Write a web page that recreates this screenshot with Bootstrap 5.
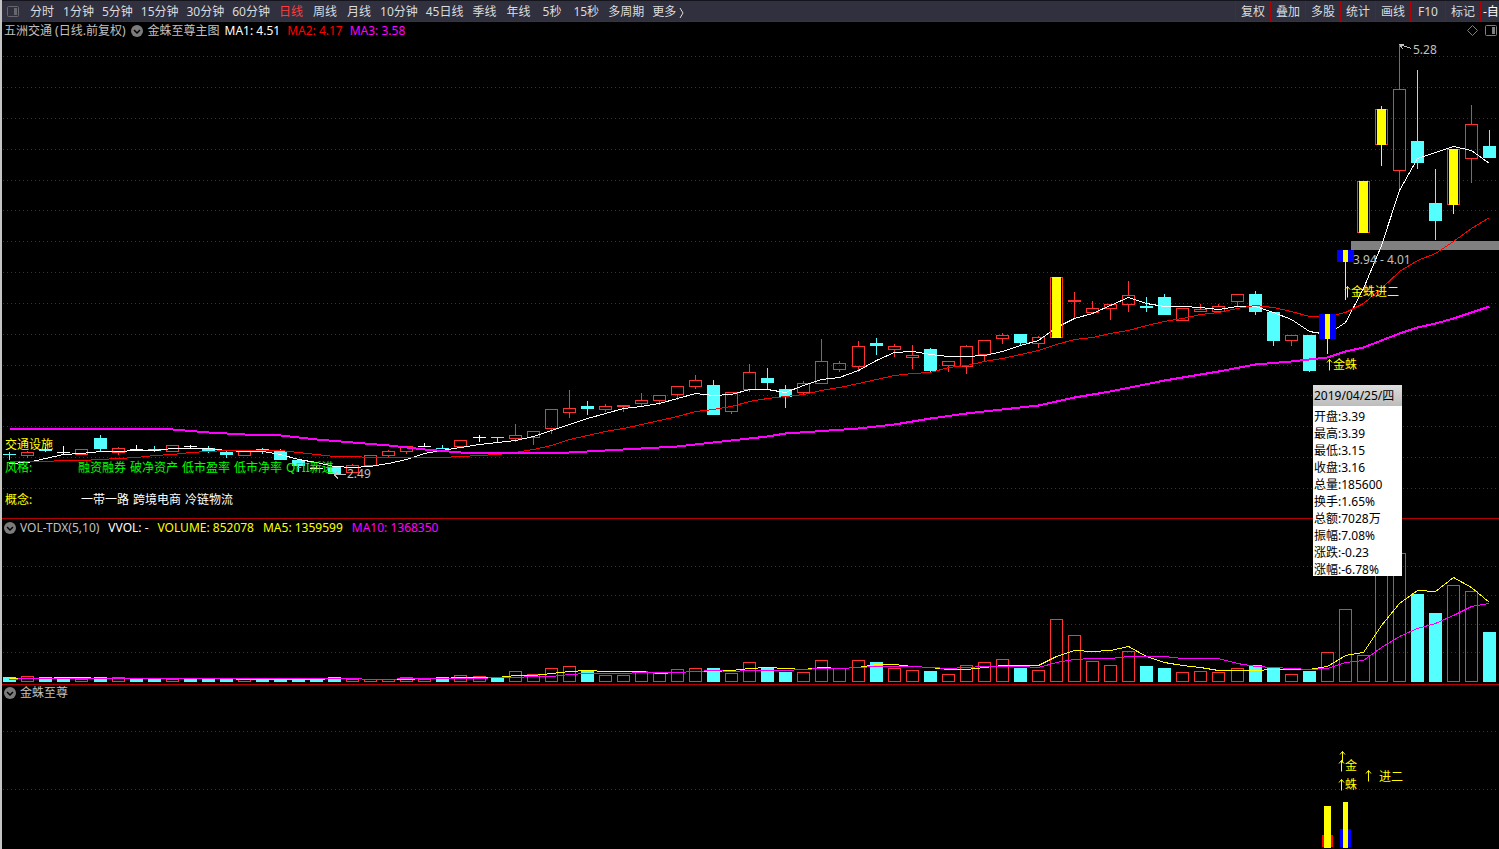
<!DOCTYPE html>
<html lang="zh-CN">
<head>
<meta charset="utf-8">
<meta name="viewport" content="width=device-width, initial-scale=1">
<title>五洲交通 日线</title>
<link href="https://cdn.jsdelivr.net/npm/bootstrap@5.3.0/dist/css/bootstrap.min.css" rel="stylesheet">
<style>
  body { font: 12px/16px "Noto Sans", "Noto Sans CJK SC", sans-serif; color: #c0c0c0; background: #000; border-left: 2px solid #c4c4c4; }
  .toolbar { height: 22px; background: #30303f; border-top: 1px solid #14141c; border-bottom: 1px solid #b40000; padding-left: 5px; gap: 6px; }
  .toolbar button { background: none; border: 0; color: #dcdcdc; line-height: 16px; padding: 2px 4px 0; white-space: nowrap; flex-shrink: 0; }
  .toolbar .two { padding: 2px 5px 0; }
  .toolbar .sec { padding: 2px 7px 0; }
  .toolbar .on { color: #ff3c3c; }
  .toolbar .tools button { width: 35px; padding: 2px 0 0; border-left: 1px solid #b40000; align-self: stretch; }
  .toolbar .tools button:last-child { width: 19px; padding-left: 2px; text-align: left; color: #fff; }
  .pane { display: grid; min-height: 0; overflow: hidden; position: relative; }
  .pane > * { grid-area: 1 / 1; }
  .pane > svg { width: 100%; height: 100%; min-height: 0; }
  .pane-price { flex: 496 1 0; border-bottom: 1px solid #b40000; }
  .pane-vol { flex: 165 1 0; border-bottom: 1px solid #b40000; }
  .pane-sig { flex: 164 1 0; }
  .caption { align-self: start; padding: 0 2px; height: 17px; white-space: nowrap; z-index: 1; gap: 5px; }
  .caption .values { gap: 7px; }
  .pane-vol .caption { gap: 9px; }
  .pane-sig .caption { height: 15px; }
  .caption button { background: none; border: 0; padding: 0; line-height: 0; }
  .c-w { color: #fff; } .c-r { color: #f00; } .c-m { color: #f0f; } .c-y { color: #ff0; } .c-g { color: #0f0; }
  .note { position: absolute; white-space: nowrap; margin-top: -7px; height: 16px; display: flex; align-items: center; }
  .quote { position: absolute; right: 97px; top: 363px; width: 89px; background: #fff; color: #000; z-index: 2; line-height: 17px; }
  .quote header { height: 21px; line-height: 21px; padding-left: 1px; margin-bottom: 2px; background: linear-gradient(#dedede, #bcbcbc); }
  .quote dl { padding-left: 1px; height: 168px; }
  .quote dt { font-weight: 400; }
</style>
</head>
<body class="vh-100 d-flex flex-column overflow-hidden m-0">
<nav class="toolbar d-flex align-items-center flex-shrink-0" aria-label="周期">
  <svg class="flex-shrink-0" width="12" height="11" aria-hidden="true"><rect x=".5" y=".5" width="11" height="10" rx="1" fill="none" stroke="#66666e"/><path d="M7 2h3v7H7z" fill="#66666e"/></svg>
  <div class="d-flex" id="periods">
    <button class="two">分时</button><button>1分钟</button><button>5分钟</button><button>15分钟</button><button>30分钟</button><button>60分钟</button><button class="two on">日线</button><button class="two">周线</button><button class="two">月线</button><button>10分钟</button><button>45日线</button><button class="two">季线</button><button class="two">年线</button><button class="sec">5秒</button><button class="two">15秒</button><button>多周期</button><button>更多 <svg width="6" height="12" viewBox="0 0 6 12" fill="none" stroke="currentColor"><path d="M1 1l3 5-3 5"/></svg></button>
  </div>
  <div class="tools d-flex ms-auto h-100"><button>复权</button><button>叠加</button><button>多股</button><button>统计</button><button>画线</button><button>F10</button><button>标记</button><button>-自</button></div>
</nav>

<main class="flex-grow-1 d-flex flex-column position-relative">
  <section class="pane pane-price" id="price">
    <svg viewBox="2 22 1497 496" preserveAspectRatio="none" shape-rendering="crispEdges"></svg>
    <div class="caption d-flex align-items-center">
      <span>五洲交通 (日线.前复权)</span>
      <button aria-label="指标菜单"><svg width="12" height="12"><circle cx="6" cy="6" r="6" fill="#7c7c7c"/><path d="M3 5l3 3 3-3" fill="none" stroke="#000" stroke-width="1.500"/></svg></button>
      <span>金蛛至尊主图</span>
      <div class="values d-flex"><span class="c-w">MA1: 4.51</span><span class="c-r">MA2: 4.17</span><span class="c-m">MA3: 3.58</span></div>
      <div class="values d-flex ms-auto">
        <svg width="11" height="11"><path d="M5.500 .5l5 5-5 5-5-5z" fill="none" stroke="#808080"/></svg>
        <svg width="12" height="11"><rect x=".5" y=".5" width="11" height="10" rx="1" fill="none" stroke="#808080"/><path d="M7 2h3v7H7z" fill="#808080"/></svg>
      </div>
    </div>
  </section>
  <section class="pane pane-vol" id="vol">
    <svg viewBox="2 519 1497 165" preserveAspectRatio="none" shape-rendering="crispEdges"></svg>
    <div class="caption d-flex align-items-center">
      <div class="d-flex align-items-center gap-1">
        <button aria-label="指标菜单"><svg width="12" height="12"><circle cx="6" cy="6" r="6" fill="#7c7c7c"/><path d="M3 5l3 3 3-3" fill="none" stroke="#000" stroke-width="1.500"/></svg></button>
        <span>VOL-TDX(5,10)</span>
      </div>
      <span class="c-w">VVOL: -</span><span class="c-y">VOLUME: 852078</span><span class="c-y">MA5: 1359599</span><span class="c-m">MA10: 1368350</span>
    </div>
  </section>
  <section class="pane pane-sig" id="sig">
    <svg viewBox="2 685 1497 164" preserveAspectRatio="none" shape-rendering="crispEdges"></svg>
    <div class="caption d-flex align-items-center">
      <div class="d-flex align-items-center gap-1">
        <button aria-label="指标菜单"><svg width="12" height="12"><circle cx="6" cy="6" r="6" fill="#7c7c7c"/><path d="M3 5l3 3 3-3" fill="none" stroke="#000" stroke-width="1.500"/></svg></button>
        <span>金蛛至尊</span>
      </div>
    </div>
  </section>
  <aside class="quote">
    <header>2019/04/25/四</header>
    <dl class="m-0">
      <div class="d-flex"><dt>开盘:</dt><dd class="m-0">3.39</dd></div>
      <div class="d-flex"><dt>最高:</dt><dd class="m-0">3.39</dd></div>
      <div class="d-flex"><dt>最低:</dt><dd class="m-0">3.15</dd></div>
      <div class="d-flex"><dt>收盘:</dt><dd class="m-0">3.16</dd></div>
      <div class="d-flex"><dt>总量:</dt><dd class="m-0">185600</dd></div>
      <div class="d-flex"><dt>换手:</dt><dd class="m-0">1.65%</dd></div>
      <div class="d-flex"><dt>总额:</dt><dd class="m-0">7028万</dd></div>
      <div class="d-flex"><dt>振幅:</dt><dd class="m-0">7.08%</dd></div>
      <div class="d-flex"><dt>涨跌:</dt><dd class="m-0">-0.23</dd></div>
      <div class="d-flex"><dt>涨幅:</dt><dd class="m-0">-6.78%</dd></div>
    </dl>
  </aside>
</main>

<script>
const RED = '#ff3232', CYAN = '#54ffff', GRID = '#b40000';
const X = i => 9 + i * 18 + Math.floor((i + 16) / 21);
const rect = (x, y, w, h, f) => `<rect x="${x}" y="${y}" width="${w}" height="${h}" fill="${f}"/>`;
const box = (x, y, b, c) => `<rect x="${x - 5.5}" y="${y + .5}" width="12" height="${Math.max(1, b - y - 1)}" fill="none" stroke="${c}"/>`;
const grid = ys => ys.map(y => `<path d="M3 ${y + .5}H1499" stroke="${GRID}" stroke-dasharray="1 3"/>`).join('');
const line = (pts, c, w = 1) => `<polyline fill="none" stroke="${c}" stroke-width="${w}" points="${pts.map(([i, y]) => (X(i) + .5) + ',' + (y + .5)).join(' ')}"/>`;
const seq = s => s.trim().split(/\s+/).map((v, i) => [i, +v]);

// kind, high, body top, body bottom, low
const candles = `c 452 454 455 460|r 451 452 456 458|c 447 449 451 452|w 446 452 453 455|r 449 449 455 455|c 435 438 449 451|r 447 448 453 455|w 445 449 450 451|c 446 449 451 452|r 445 445 452 452
w 445 446 447 448|c 446 448 451 453|c 451 452 455 458|r 451 451 456 456|c 448 449 450 454|c 449 451 460 460|c 460 460 466 472|w 466 468 469 469|c 467 467 474 475|r 464 465 473 473
r 455 455 466 466|r 450 451 456 457|r 446 446 452 454|w 443 446 447 447|c 445 448 449 449|r 440 440 447 447|w 435 437 438 442|c 437 437 438 442|r 424 435 439 442|r 431 431 438 445
r 409 409 429 434|r 390 408 413 418|c 401 406 409 415|r 404 406 410 412|r 405 405 407 412|r 393 400 404 406|r 395 395 401 405|r 386 386 395 400|r 375 380 387 389|c 380 385 415 415
r 392 392 412 414|r 364 372 390 392|c 368 378 383 389|c 385 389 397 408|r 381 383 393 395|r 339 361 384 384|r 361 363 370 372|r 341 346 367 372|c 338 343 346 355|r 344 346 350 357
r 345 355 358 369|c 348 349 371 372|r 361 361 366 372|r 345 346 367 374|r 340 340 355 361|r 333 335 339 344|c 334 334 343 346|r 336 337 344 348|y 277 277 338 338|r 292 300 302 318
r 301 308 313 313|r 304 304 309 320|r 281 295 305 312|c 297 306 308 312|c 294 297 315 315|r 308 308 321 321|r 304 309 312 312|r 304 306 312 312|r 294 294 302 306|c 291 294 312 315
c 312 312 341 346|r 335 335 341 346|c 335 335 371 372|b 314 314 339 354|b 250 250 262 300|y 181 181 233 233|y 106 109 145 166|r 44 89 171 192|c 70 141 163 169|c 169 203 221 240
y 149 149 205 214|r 105 124 159 183|c 130 146 158 158`.split(/[|\n]/).map(s => { const a = s.trim().split(' '); return [a[0], ...a.slice(1).map(Number)]; });

const ma1 = seq(`463 462 458 454 453 451 451 450 450 448 448 448 450 451 451 454 459 462 466 467 466 463 459 453 450 447 444 442 440 436
 430 424 418 413 408 406 403 398 393 395 394 389 389 392 385 379 377 370 360 352 351 354 356 356 355 351 345 340 327 318
 313 305 297 303 306 306 307 309 306 306 312 319 331 334 322 288 245 190 158 152 146 150 163`);
const ma2 = seq(`461 461 461 460 460 459 458 457 455 454 452 451 450 450 450 450 452 454 456 456 457 457 457 457 457 456 455 454 452 449
 445 439 435 431 428 424 420 416 411 409 406 401 398 396 394 390 387 383 379 375 373 372 367 365 361 358 354 350 344 339
 337 333 330 325 321 318 314 312 308 305 307 311 316 316 312 303 288 271 260 253 241 228 217`);
const ma3 = [[0,428],[8,428],[9,429],[11,432],[13,434],[15,435],[17,439],[19,442],[21,445],[22,447],[23,449],[25,452],[28,453],[31,452],[33,450],[35,448],[37,446],[38,444],[40,440],[42,436],[43,433],[47,428],[49,424],[51,418],[53,413],[55,409],[57,405],[59,397],[61,391],[64,380],[65,377],[67,371],[69,364],[71,361],[73,357],[74,351],[75,347],[76,340],[77,333],[78,327],[79,323],[80,318],[81,312],[82,306]];

let s = grid([56,87,118,149,180,210,241,272,303,334,365,395,426,457,488]);
s += rect(1351, 241, 148, 9, '#808080');
let front = '';
candles.forEach(([k, h, t, b, l], i) => {
  const x = X(i);
  if (k === 'r') {
    if (h < t) s += rect(x, h, 1, t - h, RED);
    if (l > b) s += rect(x, b, 1, l - b, RED);
    s += box(x, t, b, RED);
  } else if (k === 'c' || k === 'w') {
    const c = k === 'c' ? CYAN : '#fff';
    s += rect(x, h, 1, l - h, c) + rect(x - 6, t, 13, b - t, c);
  } else if (k === 'y') {
    front += rect(x, h, 1, l - h, '#ff0') + box(x, t, b, RED) + rect(x - 4, t, 9, b - t, '#ff0');
  } else {
    front += rect(x - 8, t, 17, b - t, '#00f') + rect(x - 2, t, 5, b - t, '#ff0') + rect(x, b, 1, l - b, '#ff0');
  }
});
s += front + line(ma1, '#fff') + line(ma2, '#f00') + line(ma3, '#f0f', 2) + front;
s += '<path d="M1411 48.500l-11-4M1399 44.500h5M1399.500 44l3 5M334 474.500h12M334 474.500l4-3M334 474.500l4 4" fill="none" stroke="#c0c0c0"/>';
document.querySelector('#price svg').innerHTML = s;

// kind and top of each volume bar
const vols = `c677 r676 c677 c678 r679 c677 r677 c678 c678 r679 c678 c678 c678 r679 c679 c679 c678 c679 c677 r679 r679 r679 r677 r679 c677 r675 r676 c678 r671 r674
 r668 r666 c671 r675 r675 r671 r673 r669 r668 c668 r673 r662 c667 c672 r672 r660 r668 r660 c662 r668 r670 c671 r674 r665 r662 r659 c668 r670 r619 r635
 r661 r665 r651 c666 c668 r672 r671 r672 r668 c665 c667 r674 c671 r652 r609 r655 r560 r553 c594 c613 r585 r591 c632`.trim().split(/\s+/);
const v5 = seq(`678 678 678 677 677 678 678 678 678 678 678 678 678 679 679 679 679 679 678 678 679 679 679 678 678 677 677 677 675 675
 673 671 670 671 671 671 673 672 671 671 670 668 667 668 669 667 668 667 664 664 666 667 669 669 667 665 665 665 656 650
 651 650 646 656 662 665 667 670 670 670 669 669 669 666 655 652 625 603 590 591 577 587 602`);
const v10 = seq(`679 678 678 678 678 678 678 678 678 678 678 678 678 678 678 678 678 678 678 678 679 679 678 678 678 678 678 677 677 676
 676 674 673 673 673 672 672 672 671 670 671 670 670 670 669 668 668 667 666 666 666 667 668 667 666 666 666 667 662 659
 658 658 656 656 656 658 658 658 663 666 667 668 669 668 662 660 647 636 628 623 615 606 603`);
s = grid([566, 595, 624, 652]);
vols.forEach((v, i) => {
  const t = +v.slice(1);
  s += v[0] === 'r' ? box(X(i), t, 682, RED) : rect(X(i) - 6, t, 13, 682 - t, CYAN);
});
s += line(v5, '#ff0') + line(v10, '#f0f');
document.querySelector('#vol svg').innerHTML = s;

s = grid([731, 789]);
s += rect(1322, 835, 11, 12, '#f00') + rect(1324, 806, 7, 42, '#ff0') + rect(1340, 829, 11, 18, '#00f') + rect(1343, 802, 5, 46, '#ff0');
document.querySelector('#sig svg').innerHTML = s;

// text pinned to points of the charts: pane, x, y, colour class, words (a leading ^ draws the arrow)
const arrow = '<svg width="7" height="12" viewBox="0 0 7 12" fill="none" stroke="currentColor"><path d="M3.500 0.500V11.500M1 3.500l2.500-3 2.500 3"/></svg>';
const panes = { price: [22, 496], vol: [519, 165], sig: [685, 164] };
[
  ['price', 1413, 49, '', '5.28'], ['price', 1353, 259, '', '3.94 - 4.01'], ['price', 347, 473, '', '2.49'],
  ['price', 1344, 291, 'c-y', '^金蛛进二'], ['price', 1326, 364, 'c-y', '^金蛛'],
  ['price', 5, 444, 'c-y', '交通设施'], ['price', 5, 467, 'c-g', '风格:'],
  ['price', 78, 467, 'c-g gap-1', '融资融券|破净资产|低市盈率|低市净率|QFII新进'],
  ['price', 5, 499, 'c-y', '概念:'], ['price', 81, 499, 'c-w gap-1', '一带一路|跨境电商|冷链物流'],
  ['sig', 1339, 756, 'c-y', '^'], ['sig', 1338, 765, 'c-y', '^金'], ['sig', 1338, 784, 'c-y', '^蛛'],
  ['sig', 1365, 775, 'c-y', '^'], ['sig', 1379, 776, 'c-y', '进二']
].forEach(([p, x, y, c, t]) => {
  const [y0, h] = panes[p];
  const words = t.replace('^', '').split('|').map(w => `<span>${w}</span>`).join('');
  document.getElementById(p).insertAdjacentHTML('beforeend',
    `<div class="note ${c}" style="left:${(x - 2) / 14.97}%;top:${(y - y0) / h * 100}%">${t[0] === '^' ? arrow : ''}${words}</div>`);
});
</script>
<script src="https://cdn.jsdelivr.net/npm/bootstrap@5.3.0/dist/js/bootstrap.bundle.min.js"></script>
</body>
</html>
